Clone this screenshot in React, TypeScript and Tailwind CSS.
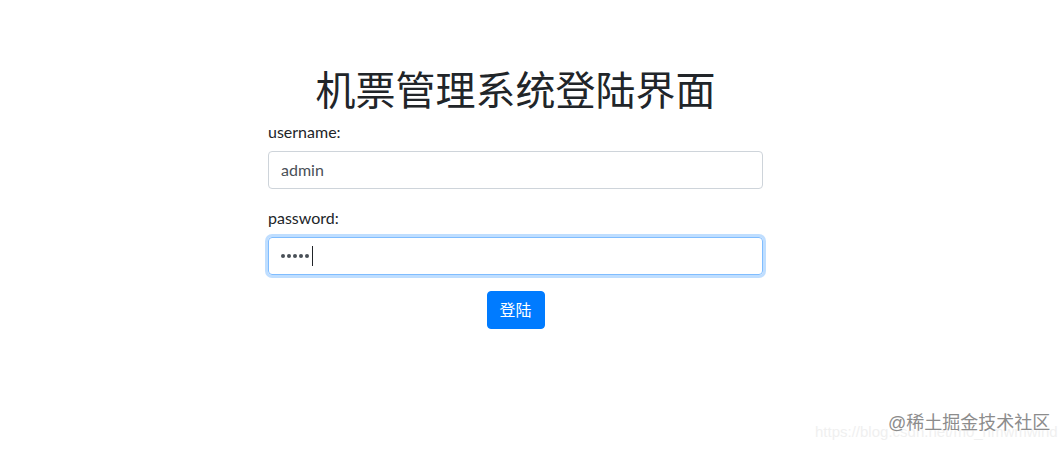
import React from "react";

const cjk = "font-['Segoe_UI','Lato','Noto_Sans_CJK_SC',sans-serif]";

export default function App() {
  return (
    <div className={`relative h-[449px] w-[1064px] overflow-hidden bg-white text-[#212529] ${cjk}`}>
      <div className="ml-[268px] flex w-[495px] flex-col pt-[64px]">
        <h1 className="mb-2 whitespace-nowrap text-center text-[40px] font-normal leading-[48px] font-['Noto_Sans_CJK_SC',sans-serif] text-[#212529]">
          机票管理系统登陆界面
        </h1>

        <form className="flex flex-col" onSubmit={(e) => e.preventDefault()}>
          <div className="mb-[17px] flex flex-col">
            <label className="mb-[7px] text-[16px] leading-6">username:</label>
            <div className="flex h-[38px] items-center rounded-[4px] border border-[#ced4da] px-3 text-[16px] text-[#495057]">
              admin
            </div>
          </div>

          <div className="mb-4 flex flex-col">
            <label className="mb-[7px] text-[16px] leading-6">password:</label>
            <div className="flex h-[38px] items-center rounded-[4px] border border-[#80bdff] px-3 text-[#495057] shadow-[0_0_0_3px_rgba(0,123,255,0.25)]">
              <span className="flex items-center gap-[2px]">
                <span className="h-[4px] w-[4px] rounded-full bg-[#495057]" />
                <span className="h-[4px] w-[4px] rounded-full bg-[#495057]" />
                <span className="h-[4px] w-[4px] rounded-full bg-[#495057]" />
                <span className="h-[4px] w-[4px] rounded-full bg-[#495057]" />
                <span className="h-[4px] w-[4px] rounded-full bg-[#495057]" />
              </span>
              <span className="ml-[3px] h-[20px] w-px bg-[#212529]" />
            </div>
          </div>

          <div className="flex justify-center">
            <button
              type="submit"
              className="h-[38px] w-[58px] rounded-[4px] border border-[#007bff] bg-[#007bff] text-[16px] text-white"
            >
              登陆
            </button>
          </div>
        </form>
      </div>

      {/* watermark */}
      <div className="pointer-events-none absolute left-[815px] top-[421px] whitespace-nowrap text-[15px] text-[#f0f0f0] font-['Liberation_Sans',sans-serif]">
        https://blog.csdn.net/m0_nmwmwind
      </div>
      <div className="pointer-events-none absolute left-[888px] top-[410px] whitespace-nowrap text-[18px] leading-[26px] text-[#8c8c8c] [text-shadow:0_0_3px_#fff,0_0_2px_#fff] font-['Liberation_Sans','Noto_Sans_CJK_SC',sans-serif]">
        @稀土掘金技术社区
      </div>
    </div>
  );
}
